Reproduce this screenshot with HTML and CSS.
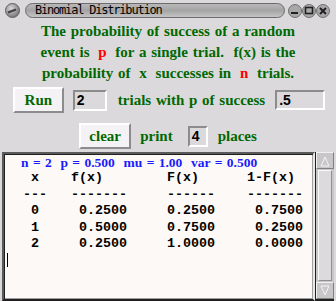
FILE: index.html
```html
<!DOCTYPE html>
<html>
<head>
<meta charset="utf-8">
<link rel="stylesheet" href="styles.css">
</head>
<body>
<div class="window">
  <div class="titlebar">
    <span class="tbtn"><svg width="15" height="15" viewBox="0 0 15 15"><defs><radialGradient id="g1" cx="0.4" cy="0.35" r="0.7"><stop offset="0" stop-color="#d8d8d8"/><stop offset="1" stop-color="#707070"/></radialGradient></defs><circle cx="7.5" cy="7.5" r="7" fill="url(#g1)" stroke="#606060"/><path d="M3 9.5 L11 6.5" stroke="#404040" stroke-width="2"/></svg></span>
    <div class="titlepill">Binomial Distribution</div>
    <span class="tbtns">
      <svg width="14" height="14" viewBox="0 0 14 14"><circle cx="7" cy="7" r="6.5" fill="#a8a8a8" stroke="#707070"/><path d="M3 9 H10" stroke="#202020" stroke-width="2"/></svg>
      <svg width="14" height="14" viewBox="0 0 14 14"><circle cx="7" cy="7" r="6.5" fill="#a8a8a8" stroke="#707070"/><rect x="3.5" y="3.5" width="7" height="6" fill="none" stroke="#202020" stroke-width="1.6"/></svg>
      <svg width="14" height="14" viewBox="0 0 14 14"><circle cx="7" cy="7" r="6.5" fill="#a8a8a8" stroke="#707070"/><path d="M4 4 L10 10 M10 4 L4 10" stroke="#202020" stroke-width="2"/></svg>
    </span>
  </div>
  <div class="desc">
    <div>The probability of success of a random</div>
    <div>event is <span class="red">p</span> for a single trial.&nbsp; f(x) is the</div>
    <div>probability of <span class="grn">x</span> successes in <span class="red">n</span> trials.</div>
  </div>
  <div class="row row1">
    <button class="btn run">Run</button>
    <span class="field f2">2</span>
    <span class="lbl">trials with p of success</span>
    <span class="field fp">.5</span>
  </div>
  <div class="row row2">
    <button class="btn clear">clear</button>
    <span class="lbl">print</span>
    <span class="field f4">4</span>
    <span class="lbl">places</span>
  </div>
  <div class="output">
    <div class="text">
      <div class="blue">n = 2&nbsp; p = 0.500&nbsp; mu = 1.00&nbsp; var = 0.500</div>
<pre class="mono">   x    f(x)        F(x)      1-F(x)
  ---   -------     ------    -------
   0     0.2500     0.2500     0.7500
   1     0.5000     0.7500     0.2500
   2     0.2500     1.0000     0.0000</pre>
      <div class="cursor"></div>
    </div>
    <div class="scroll">
      <div class="sbtn up"><svg width="12" height="12" viewBox="0 0 12 12"><path d="M2 11 L6 2 L10 11 Z" fill="#c8c8c8" stroke="#f4f4f4"/></svg></div>
      <div class="thumb"></div>
      <div class="sbtn down"><svg width="12" height="12" viewBox="0 0 12 12"><path d="M2 1 L6 10 L10 1 Z" fill="#c8c8c8" stroke="#f4f4f4"/></svg></div>
    </div>
  </div>
</div>
</body>
</html>
```
FILE: styles.css
```css
html, body {
  margin: 0;
  padding: 0;
  background: #dcd9dc;
}
.window {
  width: 336px;
  height: 301px;
  display: flex;
  flex-direction: column;
  background: #dcd9dc;
  overflow: hidden;
}
.titlebar {
  height: 21px;
  display: flex;
  align-items: center;
  padding: 0 2px 0 5px;
  box-sizing: border-box;
}
.tbtn { display: flex; width: 15px; height: 15px; }
.titlepill {
  margin-left: 5px;
  width: 260px;
  height: 15px;
  box-sizing: border-box;
  border: 1px solid #6c6c6c;
  border-radius: 8px;
  background: linear-gradient(#b8b8b8, #a4a4a4 50%, #c4c4c4);
  font-family: "DejaVu Sans Mono", monospace;
  font-size: 12px;
  letter-spacing: -1.2px;
  line-height: 13px;
  padding-left: 9px;
  color: #000;
}
.tbtns {
  margin-left: 3px;
  display: flex;
}
.desc {
  font-family: "Liberation Serif", serif;
  font-weight: bold;
  font-size: 15px;
  color: #006800;
  text-align: center;
  line-height: 21px;
  word-spacing: 1px;
}
.red { color: #ff0000; margin: 0 4px; }
.grn { margin: 0 4px; }
.row {
  display: flex;
  align-items: center;
  justify-content: center;
  font-family: "Liberation Serif", serif;
  font-weight: bold;
  font-size: 15px;
  color: #006800;
  word-spacing: 1px;
}
.row1 { margin-top: 3px; height: 26px; padding-left: 2px; }
.row2 { margin-top: 10px; height: 26px; }
.btn {
  font-family: "Liberation Serif", serif;
  font-weight: bold;
  font-size: 15px;
  color: #006800;
  background: #f4f2f4;
  border: 2px solid;
  border-color: #ffffff #8c8c8c #8c8c8c #ffffff;
  height: 26px;
  padding: 0;
  margin: 0;
}
.run { width: 51px; margin-right: 9px; }
.clear { width: 52px; margin-right: 9px; }
.field {
  font-family: "Liberation Sans", sans-serif;
  font-weight: bold;
  font-size: 14px;
  color: #000;
  border: 2px solid;
  border-color: #8c8c8c #ffffff #ffffff #8c8c8c;
  background: #dcd9dc;
  box-sizing: border-box;
  padding-left: 2px;
  line-height: 16px;
}
.f2 { width: 34px; height: 21px; margin-right: 11px; }
.fp { width: 50px; height: 20px; margin-left: 10px; }
.f4 { width: 20px; height: 21px; margin: 0 10px 0 15px; }
.output {
  flex: 1;
  display: flex;
  margin: 3px 2px 0 2px;
}
.text {
  flex: 1;
  background: #fcf9f6;
  border: 2px solid;
  border-color: #5a5a5a #e8e8e8 #202020 #5a5a5a;
  box-shadow: inset 1px 1px 0 #202020, inset -1px -1px 0 #a0a0a0;
  padding: 1px 0 0 3px;
}
.blue {
  font-family: "Liberation Serif", serif;
  font-weight: bold;
  font-size: 13.5px;
  color: #1a1aff;
  padding-left: 14px;
  line-height: 15px;
  word-spacing: 1px;
}
.mono {
  margin: 0;
  font-family: "Liberation Mono", monospace;
  font-weight: bold;
  font-size: 13.33px;
  line-height: 16.5px;
  color: #000;
}
.cursor {
  width: 1px;
  height: 14px;
  background: #000;
}
.scroll {
  width: 18px;
  display: flex;
  flex-direction: column;
  background: #c8c6c8;
  border-left: 1px solid #202020;
  border-bottom: 2px solid #202020;
}
.sbtn {
  height: 15px;
  display: flex;
  align-items: center;
  justify-content: center;
  background: #c8c6c8;
  border: 1px solid;
  border-color: #f0f0f0 #808080 #808080 #f0f0f0;
}
.thumb {
  flex: 1;
  margin: 1px 2px;
  background: #dcdadc;
  border: 1px solid;
  border-color: #f8f8f8 #909090 #909090 #f8f8f8;
}
```
